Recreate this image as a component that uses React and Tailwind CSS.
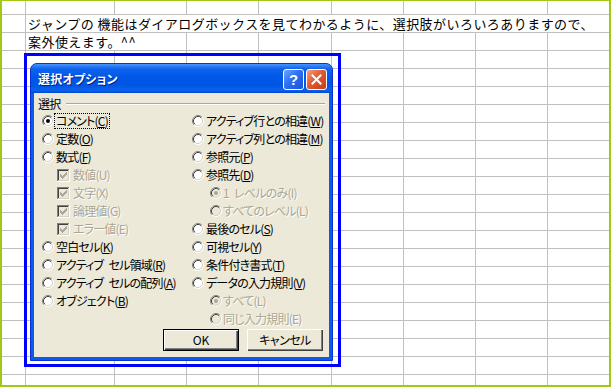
import React from 'react';

// grid cell borders (Excel gridlines)
const cellR = 'border-r border-b border-[#c0c0c0]';
const cellL = 'border-b border-[#c0c0c0]';

function Radio({ checked, disabled }) {
  return (
    <svg width="12" height="12" viewBox="0 0 12 12" className="shrink-0">
      <circle cx="6" cy="6" r="5" fill={disabled ? '#ece9d8' : '#ffffff'} />
      <path d="M2.11 9.89A5.5 5.5 0 0 1 9.89 2.11" stroke="#808080" fill="none" />
      <path d="M9.89 2.11A5.5 5.5 0 0 1 2.11 9.89" stroke="#ffffff" fill="none" />
      <path d="M2.82 9.18A4.5 4.5 0 0 1 9.18 2.82" stroke="#404040" fill="none" />
      <path d="M9.18 2.82A4.5 4.5 0 0 1 2.82 9.18" stroke="#d4d0c8" fill="none" />
      {checked && <circle cx="6" cy="6" r="2" fill={disabled ? '#aca899' : '#000000'} />}
    </svg>
  );
}

function Check() {
  return (
    <svg width="13" height="13" viewBox="0 0 13 13" className="shrink-0" shapeRendering="crispEdges">
      <rect x="0" y="0" width="13" height="13" fill="#ffffff" />
      <rect x="0" y="0" width="12" height="1" fill="#808080" />
      <rect x="0" y="0" width="1" height="12" fill="#808080" />
      <rect x="1" y="1" width="10" height="1" fill="#404040" />
      <rect x="1" y="1" width="1" height="10" fill="#404040" />
      <rect x="1" y="11" width="11" height="1" fill="#d4d0c8" />
      <rect x="11" y="1" width="1" height="11" fill="#d4d0c8" />
      <rect x="2" y="2" width="9" height="9" fill="#ece9d8" />
      <path
        d="M9 3h1v1h-1z M8 4h2v1h-2z M3 5h1v1h-1z M7 5h3v1h-3z M3 6h2v1h-2z M6 6h3v1h-3z M3 7h5v1h-5z M4 8h3v1h-3z M5 9h1v1h-1z"
        fill="#aca899"
      />
    </svg>
  );
}

function Label({ text, mn, disabled }) {
  if (disabled) {
    return (
      <span className="text-[#a9a696] [text-shadow:1px_1px_0_#ffffff] whitespace-pre">
        {text}({mn})
      </span>
    );
  }
  return (
    <span className="whitespace-pre">
      {text}(<span className="underline decoration-1 underline-offset-[1px]">{mn}</span>)
    </span>
  );
}

const leftOpts = [
  { t: 'コメント', m: 'C', kind: 'radio', checked: true, focus: true },
  { t: '定数', m: 'O', kind: 'radio' },
  { t: '数式', m: 'F', kind: 'radio' },
  { t: '数値', m: 'U', kind: 'check' },
  { t: '文字', m: 'X', kind: 'check' },
  { t: '論理値', m: 'G', kind: 'check' },
  { t: 'エラー値', m: 'E', kind: 'check' },
  { t: '空白セル', m: 'K', kind: 'radio' },
  { t: 'アクティブ\u2002セル領域', m: 'R', kind: 'radio' },
  { t: 'アクティブ\u2002セルの配列', m: 'A', kind: 'radio' },
  { t: 'オブジェクト', m: 'B', kind: 'radio' },
];

const rightOpts = [
  { t: 'アクティブ行との相違', m: 'W', kind: 'radio' },
  { t: 'アクティブ列との相違', m: 'M', kind: 'radio' },
  { t: '参照元', m: 'P', kind: 'radio' },
  { t: '参照先', m: 'D', kind: 'radio' },
  { t: '1\u2002レベルのみ', m: 'I', kind: 'sub', checked: true },
  { t: 'すべてのレベル', m: 'L', kind: 'sub' },
  { t: '最後のセル', m: 'S', kind: 'radio' },
  { t: '可視セル', m: 'Y', kind: 'radio' },
  { t: '条件付き書式', m: 'T', kind: 'radio' },
  { t: 'データの入力規則', m: 'V', kind: 'radio' },
  { t: 'すべて', m: 'L', kind: 'sub', checked: true },
  { t: '同じ入力規則', m: 'E', kind: 'sub' },
];

function Option({ o }) {
  if (o.kind === 'check') {
    return (
      <div className="h-[18px] flex items-center gap-[3px] pl-[15px]">
        <Check />
        <Label text={o.t} mn={o.m} disabled />
      </div>
    );
  }
  if (o.kind === 'sub') {
    return (
      <div className="h-[18px] flex items-center gap-[1px] pl-[18px]">
        <Radio checked={o.checked} disabled />
        <Label text={o.t} mn={o.m} disabled />
      </div>
    );
  }
  return (
    <div className="h-[18px] flex items-center gap-[2px]">
      <Radio checked={o.checked} />
      {o.focus ? (
        <span className="-ml-[2px] px-px border border-dotted border-black leading-[14px]">
          <Label text={o.t} mn={o.m} />
        </span>
      ) : (
        <Label text={o.t} mn={o.m} />
      )}
    </div>
  );
}

function Dialog() {
  return (
    <div className="ml-[3px] mt-[7px] w-[303px] h-[298px] flex flex-col rounded-t-[7px] border border-[#0831d9] bg-[#0a5ce8] overflow-hidden">
      {/* title bar */}
      <div className="h-[29px] shrink-0 flex items-center pl-[7px] pr-[5px] bg-[linear-gradient(180deg,#4a94ff_0%,#2a7cf6_8%,#0e62ec_18%,#0058e8_45%,#0056e3_75%,#0a63f0_90%,#0049cc_100%)]">
        <span className="text-white font-bold text-[12px] tracking-[0.2px] [font-feature-settings:'palt'] [text-shadow:1px_1px_0_#0a1a8a]">
          選択オプション
        </span>
        <div className="ml-auto flex gap-[2px] mt-[1px]">
          <div className="w-[21px] h-[21px] rounded-[3px] border border-white bg-[linear-gradient(135deg,#6ea6ff_0%,#2f6ff2_45%,#1553dc_100%)] flex items-center justify-center">
            <span className="text-white font-bold text-[15px] leading-none font-['Liberation_Sans',sans-serif]">?</span>
          </div>
          <div className="w-[21px] h-[21px] rounded-[3px] border border-white bg-[linear-gradient(135deg,#f4a083_0%,#e25a30_45%,#c53d13_100%)] flex items-center justify-center">
            <svg width="11" height="11" viewBox="0 0 11 11">
              <path d="M1.5 1.5L9.5 9.5M9.5 1.5L1.5 9.5" stroke="#ffffff" strokeWidth="2" strokeLinecap="square" />
            </svg>
          </div>
        </div>
      </div>
      {/* body */}
      <div className="flex-1 mx-[3px] mb-[3px] bg-[#ece9d8] flex flex-col pt-[2px] pl-[4px] pr-[4px] text-[12px] tracking-[-0.8px] text-black [font-feature-settings:'palt']">
        <div className="h-[17px] flex items-center">
          <span>選択</span>
          <div className="flex-1 ml-[6px] border-t border-[#aca899] border-b border-b-white" />
        </div>
        <div className="flex pl-[4px]">
          <div className="w-[150px] shrink-0 flex flex-col">
            {leftOpts.map((o, i) => (
              <Option key={i} o={o} />
            ))}
          </div>
          <div className="flex-1 min-w-0 flex flex-col">
            {rightOpts.map((o, i) => (
              <Option key={i} o={o} />
            ))}
          </div>
        </div>
        <div className="mt-[1px] flex justify-end gap-[8px] pr-[2px] tracking-normal">
          <div className="w-[76px] h-[22px] border border-black bg-[#ece9d8] shadow-[inset_1px_1px_0_#ffffff,inset_-1px_-1px_0_#404040,inset_-2px_-2px_0_#808080] flex items-center justify-center">
            OK
          </div>
          <div className="w-[76px] h-[22px] bg-[#ece9d8] shadow-[inset_1px_1px_0_#ffffff,inset_-1px_-1px_0_#404040,inset_-2px_-2px_0_#808080] flex items-center justify-center tracking-[-0.5px]">
            キャンセル
          </div>
        </div>
      </div>
    </div>
  );
}

function Sheet() {
  const cells = [];
  for (let c = 0; c < 9; c++) cells.push(<div key={`0-${c}`} className={c < 8 ? cellR : cellL} />);

  cells.push(<div key="1-0" className={cellR} />);
  cells.push(
    <div key="1-1" className="col-span-8 border-b border-[#c0c0c0] pl-[2px] flex items-center whitespace-nowrap text-[13px] tracking-[0.45px]">
      ジャンプの 機能はダイアログボックスを見てわかるように、選択肢がいろいろありますので、
    </div>
  );

  cells.push(<div key="2-0" className={cellR} />);
  cells.push(
    <div key="2-1" className="col-span-2 border-r border-b border-[#c0c0c0] pl-[2px] flex items-center whitespace-nowrap text-[13px] tracking-[0.45px]">
      案外使えます。^^
    </div>
  );
  for (let c = 3; c < 9; c++) cells.push(<div key={`2-${c}`} className={c < 8 ? cellR : cellL} />);

  for (let r = 3; r < 22; r++) {
    for (let c = 0; c < 9; c++) cells.push(<div key={`${r}-${c}`} className={c < 8 ? cellR : cellL} />);
  }

  return (
    <div className="grid grid-cols-[24px_89px_72px_72px_73px_72px_72px_72px_61px] grid-rows-[14px] auto-rows-[18px]">
      {cells}
    </div>
  );
}

export default function App() {
  return (
    <div className="w-[611px] h-[387px] border-[#a2c814] border-l-2 border-r-2 border-t border-b-2 bg-white overflow-hidden font-['Noto_Sans_CJK_JP',sans-serif] text-black">
      <div className="relative w-full h-full overflow-hidden">
        <Sheet />
        {/* selection highlight + dialog overlay */}
        <div className="absolute left-[22px] top-[52px] w-[317px] h-[314px] border-[3px] border-[#0000ff]">
          <Dialog />
        </div>
      </div>
    </div>
  );
}
